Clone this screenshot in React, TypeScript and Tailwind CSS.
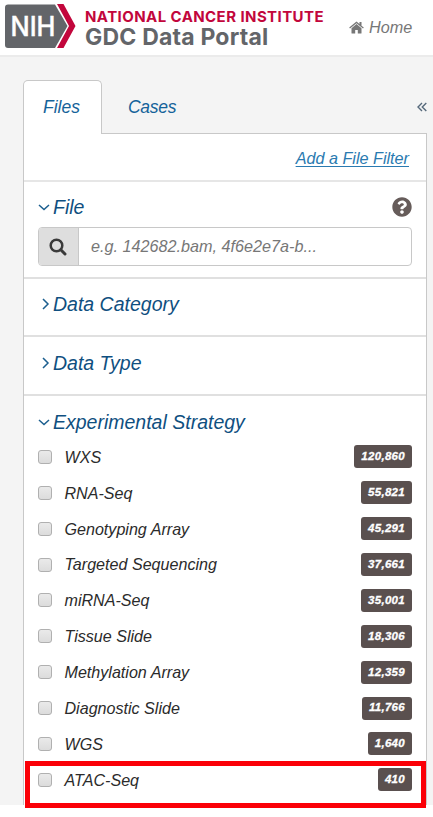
import { FaQuestionCircle } from "react-icons/fa";

const strategies = [
  { name: "WXS", files: 120860 },
  { name: "RNA-Seq", files: 55821 },
  { name: "Genotyping Array", files: 45291 },
  { name: "Targeted Sequencing", files: 37661 },
  { name: "miRNA-Seq", files: 35001 },
  { name: "Tissue Slide", files: 18306 },
  { name: "Methylation Array", files: 12359 },
  { name: "Diagnostic Slide", files: 11766 },
  { name: "WGS", files: 1640 },
  { name: "ATAC-Seq", files: 410 },
];

function NihLogo() {
  return (
    <svg width="71" height="45" viewBox="0 0 71 45" className="shrink-0 not-italic">
      <path d="M3 0.5H50L62.5 22L50 44H3Q0 44 0 41V3.5Q0 0.5 3 0.5Z" fill="#636569" />
      <path d="M52 0H58.500L70.500 22L58.500 44H52L64 22Z" fill="#c2063c" />
      <text x="5.500" y="32" fill="#fff" stroke="#fff" strokeWidth="0.400" fontSize="27.500" fontWeight="500" fontFamily="Inter, sans-serif" textLength="45" lengthAdjust="spacingAndGlyphs">
        NIH
      </text>
    </svg>
  );
}

function HomeIcon() {
  return (
    <svg width="15" height="13" viewBox="0 0 15 13" fill="#777" className="shrink-0">
      <path d="M7.500 3L2.500 7.200V12Q2.500 12.500 3 12.500H6.200V9H8.800V12.500H12Q12.500 12.500 12.500 12V7.200Z" />
      <path d="M7.500 0.500L10.500 3V1H12.500V4.700L14.800 6.600L14 7.500L7.500 2.200L1 7.500L0.200 6.600Z" />
    </svg>
  );
}

function Angle({ open }: { open?: boolean }) {
  return (
    <svg width="12" height="14" viewBox="0 0 12 14" fill="none" stroke="#1c5f8f" strokeWidth="1.500" className="shrink-0">
      <path d={open ? "M1 5L6 9.500L11 5" : "M5 2L10 7L5 12"} />
    </svg>
  );
}

function FacetTitle({ title, open }: { title: string; open?: boolean }) {
  return (
    <h2 className="flex items-center gap-[3px] text-[19.500px] leading-6 text-[#0f4f80]">
      <Angle open={open} />
      {title}
    </h2>
  );
}

export default function App() {
  return (
    <div className="h-[817px] w-[433px] overflow-hidden bg-white font-['Liberation_Sans',Arial,sans-serif] italic">
      {/* Header */}
      <header className="flex h-[57px] items-start border-b-2 border-[#ebebeb] pl-[5px] pt-1">
        <NihLogo />
        <div className="ml-[9px] w-[240px] whitespace-nowrap pt-[3px] font-['Inter',sans-serif] not-italic">
          <p className="text-[15px] font-bold leading-[19px] tracking-[0.42px] text-[#c2063c]">NATIONAL CANCER INSTITUTE</p>
          <p className="text-[23px] font-bold leading-[22px] tracking-[0.2px] text-[#636569]">GDC Data Portal</p>
        </div>
        <a className="ml-6 flex items-center gap-[5px] pt-[13px] text-[16.200px] leading-5 text-[#777]">
          <HomeIcon />
          Home
        </a>
      </header>

      <main className="h-[748px] bg-[#f4f4f4] pl-[23px] pr-1.5 pt-[23px]">
        {/* Tabs */}
        <div className="flex h-[54px] text-[17.500px] text-[#16639a]">
          <a className="flex w-[79px] items-center justify-center rounded-t-[5px] border border-b-0 border-[#c8c8c8] bg-white pr-0.5">Files</a>
          <div className="flex flex-1 items-center justify-between border-b border-[#c8c8c8] pl-[26px] pt-px">
            <a className="tracking-[-0.3px]">Cases</a>
            <svg width="10" height="10" viewBox="0 0 10 10" fill="none" stroke="#56697b" strokeWidth="1.400">
              <path d="M5 1L1 5L5 9M9.300 1L5.300 5L9.300 9" />
            </svg>
          </div>
        </div>

        <div className="h-[671px] border-x border-[#c8c8c8] bg-white">
          <div className="flex h-12 items-center justify-end border-b-2 border-[#e6e6e6] pr-[17px] pt-0.5">
            <a className="text-[16.200px] text-[#2a7ab0] underline underline-offset-2">Add a File Filter</a>
          </div>

          {/* File search */}
          <section className="h-[97px] border-b-2 border-[#e0e0e0] px-3.5 pt-[13px]">
            <div className="flex items-center justify-between">
              <FacetTitle title="File" open />
              <FaQuestionCircle className="size-5 text-[#665c5a]" />
            </div>
            <div className="mt-[8px] flex h-[39px] overflow-hidden rounded-[4px] border border-[#c8c8c8]">
              <div className="flex w-10 items-center justify-center border-r border-[#c8c8c8] bg-[#dedede] pr-0.5">
                <svg width="18" height="18" viewBox="0 0 18 18" fill="none" stroke="#3a3a3a" strokeWidth="2.500">
                  <circle cx="7.500" cy="7.500" r="5.800" />
                  <path d="M11.800 11.800L16 16" strokeLinecap="round" strokeWidth="3" />
                </svg>
              </div>
              <span className="flex items-center pl-3 text-[16.200px] text-[#777]">e.g. 142682.bam, 4f6e2e7a-b...</span>
            </div>
          </section>

          <section className="h-[58px] border-b-2 border-[#e0e0e0] pl-3.5 pt-[13px]">
            <FacetTitle title="Data Category" />
          </section>
          <section className="h-[59px] border-b-2 border-[#e0e0e0] pl-3.5 pt-[14px]">
            <FacetTitle title="Data Type" />
          </section>

          {/* Experimental strategy */}
          <section className="px-3.5 pt-[14px]">
            <FacetTitle title="Experimental Strategy" open />
            <ul className="mt-[5px]">
              {strategies.map((s) => (
                <li key={s.name} className="relative flex h-[35.880px] items-center">
                  <span className="size-3.5 rounded-[3px] border border-[#b0b0b0] bg-linear-to-b from-[#eaeaea] to-[#dcdcdc]" />
                  <span className="ml-[12.500px] flex-1 text-[16.100px] text-[#2b2b2b]">{s.name}</span>
                  <span className="flex h-[23px] items-center rounded-[3px] bg-[#5a504f] px-[7px] text-[11.500px] font-bold tracking-[0.3px] text-white [-webkit-text-stroke:0.3px_white]">
                    {s.files.toLocaleString("en-US")}
                  </span>
                  {s.name === "ATAC-Seq" && (
                    <span className="absolute -left-[13px] -right-[14px] -top-px h-[47px] border-[5px] border-[#fb0007]" />
                  )}
                </li>
              ))}
            </ul>
          </section>
        </div>
      </main>
    </div>
  );
}
